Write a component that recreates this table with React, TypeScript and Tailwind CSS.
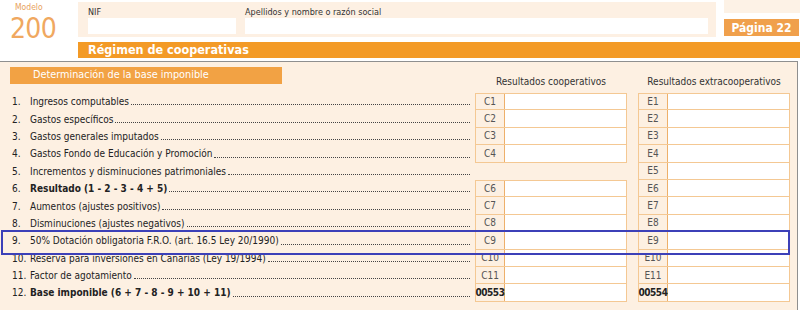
import React from 'react';

type Row = {
    num: string;
    label: React.ReactNode;
    c?: string;
    e: string;
    bold?: boolean;
};

const rows: Row[] = [
    { num: '1.', label: 'Ingresos computables', c: 'C1', e: 'E1' },
    { num: '2.', label: 'Gastos específicos', c: 'C2', e: 'E2' },
    { num: '3.', label: 'Gastos generales imputados', c: 'C3', e: 'E3' },
    { num: '4.', label: 'Gastos Fondo de Educación y Promoción', c: 'C4', e: 'E4' },
    { num: '5.', label: 'Incrementos y disminuciones patrimoniales', e: 'E5' },
    { num: '6.', label: <b>Resultado (1 - 2 - 3 - 4 + 5)</b>, c: 'C6', e: 'E6' },
    { num: '7.', label: 'Aumentos (ajustes positivos)', c: 'C7', e: 'E7' },
    { num: '8.', label: 'Disminuciones (ajustes negativos)', c: 'C8', e: 'E8' },
    { num: '9.', label: '50% Dotación obligatoria F.R.O. (art. 16.5 Ley 20/1990)', c: 'C9', e: 'E9' },
    { num: '10.', label: 'Reserva para inversiones en Canarias (Ley 19/1994)', c: 'C10', e: 'E10' },
    { num: '11.', label: 'Factor de agotamiento', c: 'C11', e: 'E11' },
    { num: '12.', label: <b>Base imponible (6 + 7 - 8 - 9 + 10 + 11)</b>, c: '00553', e: '00554', bold: true },
];

// one box of the result columns (code + white input)
const Cell: React.FC<{ code?: string; first: boolean; bold?: boolean }> = ({ code, first, bold }) => {
    if (!code) return <div className="w-[152px]" />;
    return (
        <div className={`flex w-[152px] h-full border-x border-b border-[#f4c893] ${first ? 'border-t' : ''}`}>
            <div
                className={`w-[29px] flex items-center justify-center border-r border-[#eeb06a] ${
                    bold ? 'font-bold text-[#222] text-[10px] tracking-tighter' : 'text-[#555] text-[10px]'
                }`}
            >
                {code}
            </div>
            <div className="flex-1 bg-white" />
        </div>
    );
};

export default function App() {
    return (
        <div
            className="w-[800px] h-[310px] bg-white overflow-hidden text-[#222]"
            style={{ fontFamily: '"DejaVu Sans Condensed", "Liberation Sans", sans-serif' }}
        >
            {/* Top header */}
            <div className="flex h-[38px]">
                <div className="w-[78px] flex flex-col items-start pl-[10px] pt-[2px]">
                    <span className="text-[8.5px] text-[#e8a15c] pl-[5px] leading-[10px]">Modelo</span>
                    <span className="text-[28px] text-[#f0a860] leading-[34px] tracking-tight">200</span>
                </div>
                <div className="w-[638px] h-[35px] mt-[2px] bg-[#fdf0e3] flex gap-[9px] px-[10px] pt-[5px]">
                    <div className="w-[148px] flex flex-col">
                        <span className="text-[9px] text-[#333] leading-[10px]">NIF</span>
                        <div className="mt-[1px] h-[16px] bg-white" />
                    </div>
                    <div className="flex-1 flex flex-col">
                        <span className="text-[9px] text-[#333] leading-[10px]">Apellidos y nombre o razón social</span>
                        <div className="mt-[1px] h-[16px] bg-white mr-[-2px]" />
                    </div>
                </div>
                <div className="ml-[8px] w-[76px] flex flex-col">
                    <div className="h-[13px] bg-[#fdf2e6]" />
                    <div className="mt-[6px] h-[17px] bg-[#f0a04c] flex items-center justify-center text-white font-bold text-[12px] mr-[1px]">
                        Página 22
                    </div>
                </div>
            </div>

            {/* Section bar */}
            <div className="flex mt-[4px] h-[16px]">
                <div className="w-[78px]" />
                <div className="flex-1 bg-[#f39a26] flex items-center pl-[10px] text-white font-bold text-[12.5px]">
                    Régimen de cooperativas
                </div>
            </div>

            {/* Panel */}
            <div className="relative mt-[3px] h-[252px] w-[798px] bg-[#fdf0e2] border-t border-r border-[#8f8f8f] pt-[5px]">
                <div className="flex h-[26px]">
                    <div className="ml-[10px] w-[272px] h-[17px] bg-[#f2a244] flex items-center pl-[23px] text-white text-[10.8px]">
                        Determinación de la base imponible
                    </div>
                    <div className="ml-[193px] flex self-end pb-[4px] text-[10px] text-[#333]">
                        <div className="w-[152px] text-center">Resultados cooperativos</div>
                        <div className="w-[11px]" />
                        <div className="w-[152px] text-center">Resultados extracooperativos</div>
                    </div>
                </div>

                <div className="flex flex-col">
                    {rows.map((r, i) => {
                        const prevC = i > 0 ? rows[i - 1].c : undefined;
                        return (
                            <div key={r.num} className="flex h-[17.4px] items-stretch">
                                <div className="w-[470px] flex items-center text-[10px] text-[#222]">
                                    <span className="w-[30px] pl-[12px] shrink-0">{r.num}</span>
                                    <span className="whitespace-nowrap">{r.label}</span>
                                    <span className="flex-1 self-end mb-[5px] ml-[2px] border-b border-dotted border-[#444]" />
                                </div>
                                <div className="ml-[5px] flex">
                                    <Cell code={r.c} first={!prevC} bold={r.bold} />
                                    <div className="w-[11px]" />
                                    <Cell code={r.e} first={i === 0} bold={r.bold} />
                                </div>
                            </div>
                        );
                    })}
                </div>

                {/* highlight overlay */}
                <div className="absolute left-[1px] top-[168px] w-[789px] h-[25px] border-2 border-[#3c40b8]" />
            </div>
        </div>
    );
}
